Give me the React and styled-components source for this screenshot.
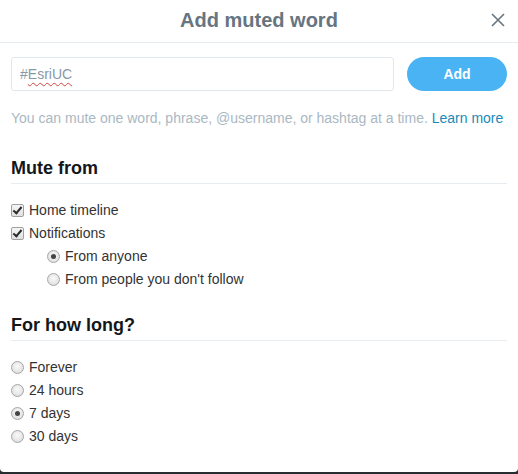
import React, { useState } from "react";
import styled, { createGlobalStyle } from "styled-components";

const GlobalStyle = createGlobalStyle`
  html, body {
    margin: 0;
    padding: 0;
    background: #2a2d30;
  }
  body {
    font-family: "Liberation Sans", Arial, sans-serif;
  }
`;

const Modal = styled.div`
  width: 518px;
  height: 472px;
  background: #fff;
  border-radius: 0 0 4px 4px;
  box-sizing: border-box;
  overflow: hidden;
`;

const Header = styled.div`
  height: 42px;
  border-bottom: 1px solid #e6ecf0;
  display: flex;
  align-items: center;
  justify-content: center;
  position: relative;
`;

const Title = styled.h2`
  margin: 0;
  font-size: 20px;
  font-weight: 700;
  color: #66757f;
  padding-bottom: 2px;
`;

const Close = styled.button`
  position: absolute;
  right: 12px;
  top: 12px;
  width: 16px;
  height: 16px;
  padding: 0;
  border: none;
  background: none;
  cursor: pointer;
  display: flex;
`;

const Body = styled.div`
  padding: 13px 11px 0 11px;
`;

const InputRow = styled.div`
  display: flex;
  align-items: center;
  gap: 13px;
`;

const WordInput = styled.div`
  flex: 1;
  height: 34px;
  box-sizing: border-box;
  border: 1px solid #e1e8ed;
  border-radius: 3px;
  display: flex;
  align-items: center;
  padding: 0 8px;
  font-size: 14px;
  color: #8899a6;
  margin-top: 1px;
`;

const Misspelled = styled.span`
  text-decoration: underline wavy #d0453f;
  text-decoration-thickness: 1px;
  text-underline-offset: 3px;
`;

const AddButton = styled.button`
  width: 100px;
  height: 34px;
  border: none;
  border-radius: 17px;
  background: #4ab3f4;
  color: #fff;
  font-family: inherit;
  font-size: 14px;
  font-weight: 700;
  cursor: pointer;
`;

const Help = styled.p`
  margin: 19px 0 0 0;
  font-size: 14px;
  color: #aab8c2;
  white-space: nowrap;
`;

const Link = styled.a`
  color: #1b8ab9;
  text-decoration: none;
`;

const Section = styled.div`
  margin-top: ${(p) => p.$top}px;
`;

const SectionTitle = styled.h3`
  margin: 0;
  padding-bottom: 4px;
  font-size: 18px;
  font-weight: 700;
  color: #14171a;
  border-bottom: 1px solid #e6ecf0;
`;

const Options = styled.div`
  display: flex;
  flex-direction: column;
  gap: 7px;
  margin-top: 18px;
`;

const Option = styled.label`
  display: flex;
  align-items: center;
  gap: 5px;
  font-size: 14px;
  color: #333;
  height: 16px;
  padding-left: ${(p) => (p.$nested ? 36 : 0)}px;
  cursor: pointer;
`;

const CheckBox = styled.input.attrs({ type: "checkbox" })`
  appearance: none;
  margin: 0;
  width: 13px;
  height: 13px;
  border: 1px solid #a0a0a0;
  border-radius: 2px;
  background: linear-gradient(#f6f6f6, #e0e0e0);
  position: relative;
  flex: none;
  &:checked::after {
    content: "";
    position: absolute;
    left: 3px;
    top: 0px;
    width: 3px;
    height: 7px;
    border: solid #2a2a2a;
    border-width: 0 2px 2px 0;
    transform: rotate(40deg);
  }
`;

const Radio = styled.input.attrs({ type: "radio" })`
  appearance: none;
  margin: 0;
  width: 13px;
  height: 13px;
  border: 1px solid #a6a6a6;
  border-radius: 50%;
  background: radial-gradient(circle at 50% 40%, #fafafa, #d8d8d8);
  position: relative;
  flex: none;
  &:checked::after {
    content: "";
    position: absolute;
    left: 3px;
    top: 3px;
    width: 5px;
    height: 5px;
    border-radius: 50%;
    background: #444;
  }
`;

const CloseIcon = () => (
  <svg width="16" height="16" viewBox="0 0 16 16">
    <path d="M2 2 L14 14 M14 2 L2 14" stroke="#66757f" strokeWidth="1.6" fill="none" />
  </svg>
);

const App = () => {
  const [home, setHome] = useState(true);
  const [notif, setNotif] = useState(true);
  const [from, setFrom] = useState("anyone");
  const [duration, setDuration] = useState("7d");

  const durations = [
    ["forever", "Forever"],
    ["24h", "24 hours"],
    ["7d", "7 days"],
    ["30d", "30 days"],
  ];

  return (
    <>
      <GlobalStyle />
      <Modal>
        <Header>
          <Title>Add muted word</Title>
          <Close aria-label="Close">
            <CloseIcon />
          </Close>
        </Header>
        <Body>
          <InputRow>
            <WordInput>
              #<Misspelled>EsriUC</Misspelled>
            </WordInput>
            <AddButton>Add</AddButton>
          </InputRow>
          <Help>
            You can mute one word, phrase, @username, or hashtag at a time.{" "}
            <Link href="#">Learn more</Link>
          </Help>

          <Section $top={32}>
            <SectionTitle>Mute from</SectionTitle>
            <Options>
              <Option>
                <CheckBox checked={home} onChange={(e) => setHome(e.target.checked)} />
                Home timeline
              </Option>
              <Option>
                <CheckBox checked={notif} onChange={(e) => setNotif(e.target.checked)} />
                Notifications
              </Option>
              <Option $nested>
                <Radio name="from" checked={from === "anyone"} onChange={() => setFrom("anyone")} />
                From anyone
              </Option>
              <Option $nested>
                <Radio name="from" checked={from === "notfollow"} onChange={() => setFrom("notfollow")} />
                From people you don't follow
              </Option>
            </Options>
          </Section>

          <Section $top={28}>
            <SectionTitle>For how long?</SectionTitle>
            <Options>
              {durations.map(([key, label]) => (
                <Option key={key}>
                  <Radio name="dur" checked={duration === key} onChange={() => setDuration(key)} />
                  {label}
                </Option>
              ))}
            </Options>
          </Section>
        </Body>
      </Modal>
    </>
  );
};

export default App;
